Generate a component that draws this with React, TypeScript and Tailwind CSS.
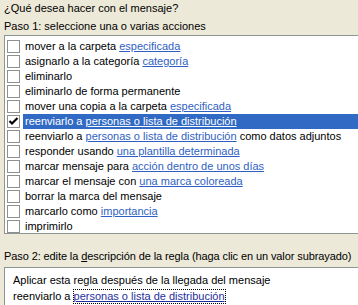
import React from "react";

type Part = { t: string; link?: boolean };

const rows: Part[][] = [
  [{ t: "mover a la carpeta " }, { t: "especificada", link: true }],
  [{ t: "asignarlo a la categoría " }, { t: "categoría", link: true }],
  [{ t: "eliminarlo" }],
  [{ t: "eliminarlo de forma permanente" }],
  [{ t: "mover una copia a la carpeta " }, { t: "especificada", link: true }],
  [{ t: "reenviarlo a " }, { t: "personas o lista de distribución", link: true }],
  [
    { t: "reenviarlo a " },
    { t: "personas o lista de distribución", link: true },
    { t: " como datos adjuntos" },
  ],
  [{ t: "responder usando " }, { t: "una plantilla determinada", link: true }],
  [{ t: "marcar mensaje para " }, { t: "acción dentro de unos días", link: true }],
  [{ t: "marcar el mensaje con " }, { t: "una marca coloreada", link: true }],
  [{ t: "borrar la marca del mensaje" }],
  [{ t: "marcarlo como " }, { t: "importancia", link: true }],
  [{ t: "imprimirlo" }],
];

function Check({ checked }: { checked: boolean }) {
  return (
    <div className="w-[13px] h-[13px] border border-[#8e8f8f] bg-white shrink-0 flex items-center justify-center">
      {checked && (
        <svg width="11" height="11" viewBox="0 0 11 11">
          <path d="M1.5 5 L4 7.5 L9.5 2" stroke="#000" strokeWidth="2.2" fill="none" />
        </svg>
      )}
    </div>
  );
}

export default function App() {
  return (
    <div
      className="w-[358px] h-[305px] bg-[#ece9d8] overflow-hidden text-[11px] leading-[13px] text-black whitespace-nowrap"
      style={{ fontFamily: '"Liberation Sans", Arial, sans-serif' }}
    >
      <div className="pl-[4px] pt-[2px] h-[17px]">¿Qué desea hacer con el mensaje?</div>
      <div className="pl-[4px] pt-[3px] h-[18px]">Paso 1: seleccione una o varias acciones</div>
      <div className="ml-[4px] border-l border-t border-b border-[#8e9595] bg-white pt-[3px] h-[199px]">
        {rows.map((r, i) => {
          const sel = i === 5;
          return (
            <div key={i} className="flex items-center h-[15px] pl-[2px]">
              <Check checked={sel} />
              <div
                className={
                  "ml-[3px] pl-[2px] h-[15px] flex-1 flex items-center whitespace-nowrap " +
                  (sel ? "bg-[#316ac5] text-white" : "")
                }
              >
                {r.map((p, j) =>
                  p.link ? (
                    <span key={j} className={"underline " + (sel ? "text-white" : "text-[#2f5fc2]")}>
                      {p.t}
                    </span>
                  ) : (
                    <span key={j} className="whitespace-pre">{p.t}</span>
                  )
                )}
              </div>
            </div>
          );
        })}
      </div>
      <div className="pl-[4px] pt-[16px] h-[33px] tracking-[-0.1px]">
        Paso 2: edite la <span className="underline">d</span>escripción de la regla (haga clic en un valor subrayado)
      </div>
      <div className="ml-[4px] border-l border-t border-[#8e9595] bg-white h-[60px] pl-[8px] pt-[4px]">
        <div className="h-[16px] flex items-center">Aplicar esta regla después de la llegada del mensaje</div>
        <div className="h-[16px] flex items-center whitespace-pre">
          reenviarlo a{" "}
          <span className="underline text-[#1f2ea0] outline outline-1 outline-dotted outline-black">
            personas o lista de distribución
          </span>
        </div>
      </div>
    </div>
  );
}
